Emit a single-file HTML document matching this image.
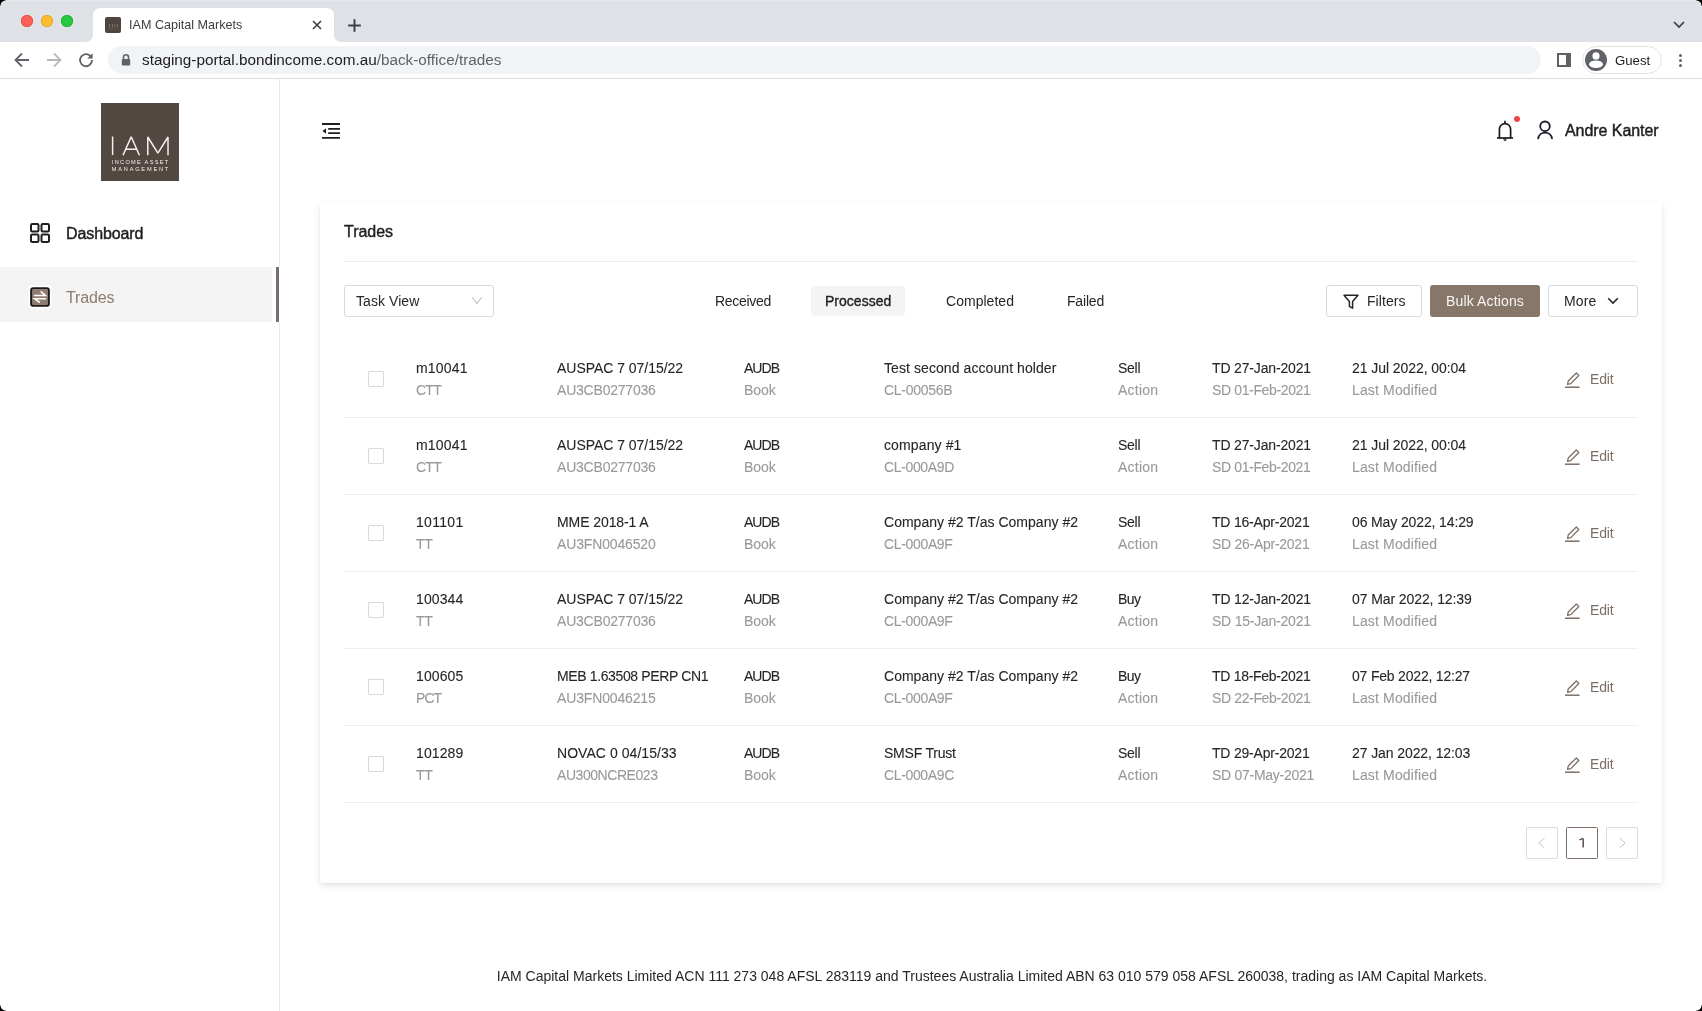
<!DOCTYPE html>
<html><head><meta charset="utf-8">
<style>
*{margin:0;padding:0;box-sizing:border-box}
html,body{width:1702px;height:1011px;overflow:hidden;background:#fff;font-family:"Liberation Sans",sans-serif;color:#262626}
.a{position:absolute}
.t{position:absolute;white-space:nowrap;line-height:20px;will-change:transform}
#tabstrip{left:0;top:0;width:1702px;height:42px;background:#dee1e6}
#toolbar{left:0;top:42px;width:1702px;height:37px;background:#fff;border-bottom:1px solid #dadce0}
#sidebar{left:0;top:79px;width:280px;height:932px;border-right:1px solid #e8e8e8}
.card{left:320px;top:203px;width:1342px;height:680px;background:#fff;border-radius:2px;box-shadow:0 3px 8px rgba(0,0,0,0.09),0 1px 3px rgba(0,0,0,0.05)}
.row1{font-size:14px;color:#262626;-webkit-text-stroke:0.1px #262626}
.row2{font-size:14px;color:#999;-webkit-text-stroke:0.1px #999}
.divl{position:absolute;left:344px;width:1294px;height:1px;background:#efefef}
</style></head><body>
<!-- Chrome -->
<div id="tabstrip" class="a"></div><div class="a" style="left:0;top:0;width:1702px;height:1px;background:#e7e8ec"></div>
<div id="toolbar" class="a"></div>

<!-- traffic lights -->
<div class="a" style="left:21px;top:15px;width:12px;height:12px;border-radius:50%;background:#fe5f57;box-shadow:inset 0 0 0 0.8px #e0443e"></div>
<div class="a" style="left:41px;top:15px;width:12px;height:12px;border-radius:50%;background:#febc2e;box-shadow:inset 0 0 0 0.8px #dea123"></div>
<div class="a" style="left:61px;top:15px;width:12px;height:12px;border-radius:50%;background:#28c840;box-shadow:inset 0 0 0 0.8px #1aab29"></div>
<!-- active tab -->
<svg class="a" style="left:85px;top:8px" width="258" height="35" viewBox="0 0 258 35">
<path d="M0 34 Q8 34 8 26 L8 8 Q8 0 16 0 L241 0 Q249 0 249 8 L249 26 Q249 34 257 34 L257 35 L0 35 Z" fill="#fff"/>
</svg>
<div class="a" style="left:105px;top:17px;width:16px;height:16px;background:#4f443e;border-radius:2px"></div><svg class="a" style="left:105px;top:17px" width="16" height="16" viewBox="0 0 16 16"><g stroke="#7d736d" stroke-width="1"><path d="M4.5 7V10.5M7.5 7V10.5M10 7V10.5M12.5 7V10.5"/></g><path d="M5 12H11.5" stroke="#645a54" stroke-width="1"/></svg>
<div class="t" style="left:129px;top:15px;font-size:12.6px;color:#3c4043">IAM Capital Markets</div>
<svg class="a" style="left:311px;top:19px" width="12" height="12" viewBox="0 0 12 12"><path d="M2 2L10 10M10 2L2 10" stroke="#3c4043" stroke-width="1.6"/></svg>
<svg class="a" style="left:347px;top:18px" width="15" height="15" viewBox="0 0 15 15"><path d="M7.5 1.2V13.8M1.2 7.5H13.8" stroke="#3c4043" stroke-width="2"/></svg>
<svg class="a" style="left:1672px;top:19px" width="14" height="10" viewBox="0 0 14 10"><path d="M2 3L7 8L12 3" stroke="#3c4043" stroke-width="1.7" fill="none"/></svg>
<!-- toolbar icons -->
<svg class="a" style="left:13px;top:51px" width="18" height="18" viewBox="0 0 18 18"><path d="M16 9H3M9 2.5L2.5 9L9 15.5" stroke="#5f6368" stroke-width="1.8" fill="none"/></svg>
<svg class="a" style="left:45px;top:51px" width="18" height="18" viewBox="0 0 18 18"><path d="M2 9H15M9 2.5L15.5 9L9 15.5" stroke="#b7b9bc" stroke-width="1.8" fill="none"/></svg>
<svg class="a" style="left:77px;top:51px" width="18" height="18" viewBox="0 0 18 18"><path d="M14.2 6.2A6 6 0 1 0 15 9" stroke="#5f6368" stroke-width="1.8" fill="none"/><path d="M15.6 2.2V7.6H10.2Z" fill="#5f6368"/></svg>
<div class="a" style="left:108px;top:46px;width:1433px;height:28px;border-radius:14px;background:#f1f3f4"></div>
<svg class="a" style="left:120px;top:53px" width="12" height="14" viewBox="0 0 12 14"><path d="M3.5 6V4.2A2.5 2.5 0 0 1 8.5 4.2V6" stroke="#5f6368" stroke-width="1.6" fill="none"/><rect x="1.8" y="6" width="8.4" height="6.6" rx="1" fill="#5f6368"/></svg>
<div class="t" style="left:142px;top:50px;font-size:15.3px;color:#202124">staging-portal.bondincome.com.au<span style="color:#5f6368">/back-office/trades</span></div>
<div class="a" style="left:1557px;top:53px;width:14px;height:14px;background:#5f6368"></div><div class="a" style="left:1559px;top:55px;width:7px;height:10px;background:#fff"></div>
<div class="a" style="left:1582px;top:46px;width:80px;height:28px;border-radius:14px;border:1px solid #e3e3e3"></div>
<svg class="a" style="left:1585px;top:49px" width="22" height="22" viewBox="0 0 22 22"><defs><clipPath id="cc"><circle cx="11" cy="11" r="11"/></clipPath></defs><circle cx="11" cy="11" r="11" fill="#5f6368"/><g clip-path="url(#cc)"><circle cx="11" cy="6.9" r="3.6" fill="#fff"/><ellipse cx="11" cy="15.3" rx="6.9" ry="3.8" fill="#fff"/></g></svg>
<div class="t" style="left:1615px;top:51px;font-size:13.2px;color:#202124">Guest</div>
<div class="a" style="left:1679px;top:54px;width:3px;height:3px;border-radius:50%;background:#5f6368"></div>
<div class="a" style="left:1679px;top:59px;width:3px;height:3px;border-radius:50%;background:#5f6368"></div>
<div class="a" style="left:1679px;top:64px;width:3px;height:3px;border-radius:50%;background:#5f6368"></div>
<div id="sidebar" class="a"></div>

<!-- logo -->
<div class="a" style="left:101px;top:103px;width:78px;height:78px;background:#524741"></div>
<svg class="a" style="left:101px;top:103px;will-change:transform" width="78" height="78" viewBox="0 0 78 78">
<g stroke="#f4f1ee" stroke-width="1.5" fill="none" stroke-linejoin="bevel">
<path d="M11.6 33.5V52"/>
<path d="M22 52.2L30.2 33.8L38.4 52.2M24.8 46.2H35.6"/>
<path d="M46.8 52.2V34L56.9 50.2L67 34V52.2"/>
</g>
<text x="10.8" y="61.2" font-family="Liberation Sans" font-size="5.6" fill="#f4f1ee" textLength="56.4" lengthAdjust="spacing">INCOME ASSET</text>
<text x="10.8" y="68.2" font-family="Liberation Sans" font-size="5.6" fill="#f4f1ee" textLength="56.4" lengthAdjust="spacing">MANAGEMENT</text>
</svg>
<!-- nav -->
<svg class="a" style="left:30px;top:223px" width="20" height="20" viewBox="0 0 20 20"><g fill="none" stroke="#1f1f1f" stroke-width="2"><rect x="1" y="1" width="7.5" height="7.5" rx="1.2"/><rect x="11.5" y="1" width="7.5" height="7.5" rx="1.2"/><rect x="1" y="11.5" width="7.5" height="7.5" rx="1.2"/><rect x="11.5" y="11.5" width="7.5" height="7.5" rx="1.2"/></g></svg>
<div class="t" style="left:66px;top:224px;font-size:16px;color:#1f1f1f;-webkit-text-stroke:0.45px #1f1f1f;letter-spacing:-0.107px">Dashboard</div>
<div class="a" style="left:0;top:267px;width:272px;height:55px;background:#f4f4f4"></div><div class="a" style="left:272px;top:267px;width:8px;height:55px;background:#fff"></div>
<div class="a" style="left:276px;top:267px;width:3px;height:55px;background:#7b7069"></div>
<svg class="a" style="left:28px;top:285px" width="24" height="24" viewBox="0 0 24 24"><rect x="0.5" y="0.5" width="23" height="23" rx="4" fill="#fff"/><rect x="3.1" y="3.1" width="17.8" height="17.8" rx="2.2" fill="#8f7d71" stroke="#1a1a1a" stroke-width="1.9"/><g stroke="#fff" stroke-width="1.6" fill="none" stroke-linecap="round"><path d="M6.6 10.5H17.3L13.2 6.9"/><path d="M17.5 13.7H6.6L11.2 17.2"/></g></svg>
<div class="t" style="left:66px;top:287.5px;font-size:16px;color:#8c7b70;letter-spacing:-0.131px">Trades</div>
<!-- header -->
<svg class="a" style="left:321px;top:122px" width="20" height="18" viewBox="0 0 20 18"><g stroke="#1f1f1f" stroke-width="1.8"><path d="M1 2H19M7.2 6.8H19M7.2 11.1H19M1 15.9H19"/></g><path d="M5 6.2V11.7L1.5 8.95Z" fill="#1f1f1f"/></svg>
<svg class="a" style="left:1495px;top:119px" width="20" height="23" viewBox="0 0 20 23"><g fill="none" stroke="#1a1a1a" stroke-width="1.7"><path d="M4.4 19V10.2A5.6 5.6 0 0 1 15.6 10.2V19"/><path d="M2 19H18"/><path d="M10 1.8V4.4"/></g><rect x="8.6" y="19.5" width="2.8" height="2.2" rx="0.6" fill="#1a1a1a"/><rect x="9.4" y="20" width="1.2" height="1" fill="#888"/></svg>
<div class="a" style="left:1514px;top:116px;width:6px;height:6px;border-radius:50%;background:#f0474b"></div>
<svg class="a" style="left:1535px;top:120px" width="20" height="20" viewBox="0 0 20 20"><g fill="none" stroke="#1a1a2e" stroke-width="1.8" stroke-linecap="round"><circle cx="10" cy="6.3" r="4.8"/><path d="M3.2 18.4A7 7 0 0 1 17 18.4"/></g></svg>
<div class="t" style="left:1564.5px;top:121px;font-size:16px;color:#1f1f1f;-webkit-text-stroke:0.45px #1f1f1f;letter-spacing:-0.057px">Andre Kanter</div>
<div class="card a"></div>
<div class="t" style="left:344px;top:221.5px;font-size:16px;color:#1f1f1f;-webkit-text-stroke:0.4px #1f1f1f;letter-spacing:-0.037px">Trades</div>
<div class="a" style="left:344px;top:261px;width:1294px;height:1px;background:#ededed"></div>
<div class="a" style="left:344px;top:285px;width:150px;height:32px;border:1px solid #d9d9d9;border-radius:3px"></div>
<div class="t" style="left:356px;top:291px;font-size:14px;color:#262626;letter-spacing:0.061px">Task View</div>
<svg class="a" style="left:471px;top:296px" width="12" height="10" viewBox="0 0 12 10"><path d="M1.3 1.5L5.9 7.6L10.5 1.5" stroke="#bfbfbf" stroke-width="1.1" fill="none"/></svg>
<div class="t" style="left:715px;top:291px;font-size:14px;color:#262626;letter-spacing:-0.308px">Received</div>
<div class="a" style="left:811px;top:286px;width:94px;height:30px;border-radius:4px;background:#f4f4f4"></div>
<div class="t" style="left:825px;top:291px;font-size:14px;color:#1f1f1f;-webkit-text-stroke:0.35px #1f1f1f;letter-spacing:0.014px">Processed</div>
<div class="t" style="left:946px;top:291px;font-size:14px;color:#262626;letter-spacing:0.033px">Completed</div>
<div class="t" style="left:1067px;top:291px;font-size:14px;color:#262626;letter-spacing:-0.178px">Failed</div>
<div class="a" style="left:1326px;top:285px;width:96px;height:32px;border:1px solid #d9d9d9;border-radius:3px"></div>
<svg class="a" style="left:1342px;top:293px" width="18" height="17" viewBox="0 0 18 17"><path d="M2 2.2H16L10.6 8.6V15.2L7.4 13.4V8.6Z" stroke="#262626" stroke-width="1.5" fill="none" stroke-linejoin="round"/></svg>
<div class="t" style="left:1367px;top:291px;font-size:14px;color:#262626;letter-spacing:0.068px">Filters</div>
<div class="a" style="left:1430px;top:285px;width:110px;height:32px;border-radius:3px;background:#877769"></div>
<div class="t" style="left:1446px;top:291px;font-size:14px;color:#f7f5f3;letter-spacing:0.141px">Bulk Actions</div>
<div class="a" style="left:1548px;top:285px;width:90px;height:32px;border:1px solid #d9d9d9;border-radius:3px"></div>
<div class="t" style="left:1564px;top:291px;font-size:14px;color:#262626;letter-spacing:0.115px">More</div>
<svg class="a" style="left:1606px;top:295px" width="14" height="12" viewBox="0 0 14 12"><path d="M2.2 3.2L7 8L11.8 3.2" stroke="#262626" stroke-width="1.6" fill="none"/></svg>
<div class="a" style="left:368px;top:371px;width:16px;height:16px;border:1px solid #d9d9d9;border-radius:1px"></div>
<div class="t row1" style="left:416px;top:358px;letter-spacing:0.206px">m10041</div><div class="t row2" style="left:416px;top:380px;letter-spacing:-0.742px">CTT</div>
<div class="t row1" style="left:556.5px;top:358px;letter-spacing:-0.035px">AUSPAC 7 07/15/22</div><div class="t row2" style="left:556.5px;top:380px;letter-spacing:-0.21px">AU3CB0277036</div>
<div class="t row1" style="left:744px;top:358px;letter-spacing:-0.964px">AUDB</div><div class="t row2" style="left:744px;top:380px;letter-spacing:-0.042px">Book</div>
<div class="t row1" style="left:884px;top:358px;letter-spacing:0.077px">Test second account holder</div><div class="t row2" style="left:884px;top:380px;letter-spacing:-0.279px">CL-00056B</div>
<div class="t row1" style="left:1118px;top:358px;letter-spacing:-0.271px">Sell</div><div class="t row2" style="left:1118px;top:380px;letter-spacing:0.25px">Action</div>
<div class="t row1" style="left:1211.5px;top:358px;letter-spacing:-0.163px">TD 27-Jan-2021</div><div class="t row2" style="left:1211.5px;top:380px;letter-spacing:-0.362px">SD 01-Feb-2021</div>
<div class="t row1" style="left:1352px;top:358px;letter-spacing:-0.066px">21 Jul 2022, 00:04</div><div class="t row2" style="left:1352px;top:380px;letter-spacing:0.146px">Last Modified</div>
<svg class="a" style="left:1564px;top:370px" width="18" height="19" viewBox="0 0 18 19"><path d="M3.6 14.3L4.2 11L12.3 3L14.8 5.5L6.8 13.6Z" stroke="#7d6e65" stroke-width="1.3" fill="none" stroke-linejoin="round"/><path d="M1 17.2H15.6" stroke="#7d6e65" stroke-width="1.5"/></svg>
<div class="t" style="left:1590px;top:369px;font-size:14px;color:#7d6e65;letter-spacing:-0.135px">Edit</div>
<div class="divl" style="top:417px"></div>
<div class="a" style="left:368px;top:448px;width:16px;height:16px;border:1px solid #d9d9d9;border-radius:1px"></div>
<div class="t row1" style="left:416px;top:435px;letter-spacing:0.206px">m10041</div><div class="t row2" style="left:416px;top:457px;letter-spacing:-0.742px">CTT</div>
<div class="t row1" style="left:556.5px;top:435px;letter-spacing:-0.035px">AUSPAC 7 07/15/22</div><div class="t row2" style="left:556.5px;top:457px;letter-spacing:-0.21px">AU3CB0277036</div>
<div class="t row1" style="left:744px;top:435px;letter-spacing:-0.964px">AUDB</div><div class="t row2" style="left:744px;top:457px;letter-spacing:-0.042px">Book</div>
<div class="t row1" style="left:884px;top:435px;letter-spacing:0.123px">company #1</div><div class="t row2" style="left:884px;top:457px;letter-spacing:-0.354px">CL-000A9D</div>
<div class="t row1" style="left:1118px;top:435px;letter-spacing:-0.271px">Sell</div><div class="t row2" style="left:1118px;top:457px;letter-spacing:0.25px">Action</div>
<div class="t row1" style="left:1211.5px;top:435px;letter-spacing:-0.163px">TD 27-Jan-2021</div><div class="t row2" style="left:1211.5px;top:457px;letter-spacing:-0.362px">SD 01-Feb-2021</div>
<div class="t row1" style="left:1352px;top:435px;letter-spacing:-0.066px">21 Jul 2022, 00:04</div><div class="t row2" style="left:1352px;top:457px;letter-spacing:0.146px">Last Modified</div>
<svg class="a" style="left:1564px;top:447px" width="18" height="19" viewBox="0 0 18 19"><path d="M3.6 14.3L4.2 11L12.3 3L14.8 5.5L6.8 13.6Z" stroke="#7d6e65" stroke-width="1.3" fill="none" stroke-linejoin="round"/><path d="M1 17.2H15.6" stroke="#7d6e65" stroke-width="1.5"/></svg>
<div class="t" style="left:1590px;top:446px;font-size:14px;color:#7d6e65;letter-spacing:-0.135px">Edit</div>
<div class="divl" style="top:494px"></div>
<div class="a" style="left:368px;top:525px;width:16px;height:16px;border:1px solid #d9d9d9;border-radius:1px"></div>
<div class="t row1" style="left:416px;top:512px;letter-spacing:0.306px">101101</div><div class="t row2" style="left:416px;top:534px;letter-spacing:-0.281px">TT</div>
<div class="t row1" style="left:556.5px;top:512px;letter-spacing:-0.082px">MME 2018-1 A</div><div class="t row2" style="left:556.5px;top:534px;letter-spacing:-0.149px">AU3FN0046520</div>
<div class="t row1" style="left:744px;top:512px;letter-spacing:-0.964px">AUDB</div><div class="t row2" style="left:744px;top:534px;letter-spacing:-0.042px">Book</div>
<div class="t row1" style="left:884px;top:512px;letter-spacing:0.019px">Company #2 T/as Company #2</div><div class="t row2" style="left:884px;top:534px;letter-spacing:-0.34px">CL-000A9F</div>
<div class="t row1" style="left:1118px;top:512px;letter-spacing:-0.271px">Sell</div><div class="t row2" style="left:1118px;top:534px;letter-spacing:0.25px">Action</div>
<div class="t row1" style="left:1211.5px;top:512px;letter-spacing:-0.207px">TD 16-Apr-2021</div><div class="t row2" style="left:1211.5px;top:534px;letter-spacing:-0.269px">SD 26-Apr-2021</div>
<div class="t row1" style="left:1352px;top:512px;letter-spacing:-0.127px">06 May 2022, 14:29</div><div class="t row2" style="left:1352px;top:534px;letter-spacing:0.146px">Last Modified</div>
<svg class="a" style="left:1564px;top:524px" width="18" height="19" viewBox="0 0 18 19"><path d="M3.6 14.3L4.2 11L12.3 3L14.8 5.5L6.8 13.6Z" stroke="#7d6e65" stroke-width="1.3" fill="none" stroke-linejoin="round"/><path d="M1 17.2H15.6" stroke="#7d6e65" stroke-width="1.5"/></svg>
<div class="t" style="left:1590px;top:523px;font-size:14px;color:#7d6e65;letter-spacing:-0.135px">Edit</div>
<div class="divl" style="top:571px"></div>
<div class="a" style="left:368px;top:602px;width:16px;height:16px;border:1px solid #d9d9d9;border-radius:1px"></div>
<div class="t row1" style="left:416px;top:589px;letter-spacing:0.1px">100344</div><div class="t row2" style="left:416px;top:611px;letter-spacing:-0.281px">TT</div>
<div class="t row1" style="left:556.5px;top:589px;letter-spacing:-0.035px">AUSPAC 7 07/15/22</div><div class="t row2" style="left:556.5px;top:611px;letter-spacing:-0.21px">AU3CB0277036</div>
<div class="t row1" style="left:744px;top:589px;letter-spacing:-0.964px">AUDB</div><div class="t row2" style="left:744px;top:611px;letter-spacing:-0.042px">Book</div>
<div class="t row1" style="left:884px;top:589px;letter-spacing:0.019px">Company #2 T/as Company #2</div><div class="t row2" style="left:884px;top:611px;letter-spacing:-0.34px">CL-000A9F</div>
<div class="t row1" style="left:1118px;top:589px;letter-spacing:-0.523px">Buy</div><div class="t row2" style="left:1118px;top:611px;letter-spacing:0.25px">Action</div>
<div class="t row1" style="left:1211.5px;top:589px;letter-spacing:-0.163px">TD 12-Jan-2021</div><div class="t row2" style="left:1211.5px;top:611px;letter-spacing:-0.227px">SD 15-Jan-2021</div>
<div class="t row1" style="left:1352px;top:589px;letter-spacing:-0.094px">07 Mar 2022, 12:39</div><div class="t row2" style="left:1352px;top:611px;letter-spacing:0.146px">Last Modified</div>
<svg class="a" style="left:1564px;top:601px" width="18" height="19" viewBox="0 0 18 19"><path d="M3.6 14.3L4.2 11L12.3 3L14.8 5.5L6.8 13.6Z" stroke="#7d6e65" stroke-width="1.3" fill="none" stroke-linejoin="round"/><path d="M1 17.2H15.6" stroke="#7d6e65" stroke-width="1.5"/></svg>
<div class="t" style="left:1590px;top:600px;font-size:14px;color:#7d6e65;letter-spacing:-0.135px">Edit</div>
<div class="divl" style="top:648px"></div>
<div class="a" style="left:368px;top:679px;width:16px;height:16px;border:1px solid #d9d9d9;border-radius:1px"></div>
<div class="t row1" style="left:416px;top:666px;letter-spacing:0.1px">100605</div><div class="t row2" style="left:416px;top:688px;letter-spacing:-0.945px">PCT</div>
<div class="t row1" style="left:556.5px;top:666px;letter-spacing:-0.372px">MEB 1.63508 PERP CN1</div><div class="t row2" style="left:556.5px;top:688px;letter-spacing:-0.149px">AU3FN0046215</div>
<div class="t row1" style="left:744px;top:666px;letter-spacing:-0.964px">AUDB</div><div class="t row2" style="left:744px;top:688px;letter-spacing:-0.042px">Book</div>
<div class="t row1" style="left:884px;top:666px;letter-spacing:0.019px">Company #2 T/as Company #2</div><div class="t row2" style="left:884px;top:688px;letter-spacing:-0.34px">CL-000A9F</div>
<div class="t row1" style="left:1118px;top:666px;letter-spacing:-0.523px">Buy</div><div class="t row2" style="left:1118px;top:688px;letter-spacing:0.25px">Action</div>
<div class="t row1" style="left:1211.5px;top:666px;letter-spacing:-0.298px">TD 18-Feb-2021</div><div class="t row2" style="left:1211.5px;top:688px;letter-spacing:-0.362px">SD 22-Feb-2021</div>
<div class="t row1" style="left:1352px;top:666px;letter-spacing:-0.195px">07 Feb 2022, 12:27</div><div class="t row2" style="left:1352px;top:688px;letter-spacing:0.146px">Last Modified</div>
<svg class="a" style="left:1564px;top:678px" width="18" height="19" viewBox="0 0 18 19"><path d="M3.6 14.3L4.2 11L12.3 3L14.8 5.5L6.8 13.6Z" stroke="#7d6e65" stroke-width="1.3" fill="none" stroke-linejoin="round"/><path d="M1 17.2H15.6" stroke="#7d6e65" stroke-width="1.5"/></svg>
<div class="t" style="left:1590px;top:677px;font-size:14px;color:#7d6e65;letter-spacing:-0.135px">Edit</div>
<div class="divl" style="top:725px"></div>
<div class="a" style="left:368px;top:756px;width:16px;height:16px;border:1px solid #d9d9d9;border-radius:1px"></div>
<div class="t row1" style="left:416px;top:743px;letter-spacing:0.1px">101289</div><div class="t row2" style="left:416px;top:765px;letter-spacing:-0.281px">TT</div>
<div class="t row1" style="left:556.5px;top:743px;letter-spacing:0.054px">NOVAC 0 04/15/33</div><div class="t row2" style="left:556.5px;top:765px;letter-spacing:-0.44px">AU300NCRE023</div>
<div class="t row1" style="left:744px;top:743px;letter-spacing:-0.964px">AUDB</div><div class="t row2" style="left:744px;top:765px;letter-spacing:-0.042px">Book</div>
<div class="t row1" style="left:884px;top:743px;letter-spacing:-0.222px">SMSF Trust</div><div class="t row2" style="left:884px;top:765px;letter-spacing:-0.363px">CL-000A9C</div>
<div class="t row1" style="left:1118px;top:743px;letter-spacing:-0.271px">Sell</div><div class="t row2" style="left:1118px;top:765px;letter-spacing:0.25px">Action</div>
<div class="t row1" style="left:1211.5px;top:743px;letter-spacing:-0.207px">TD 29-Apr-2021</div><div class="t row2" style="left:1211.5px;top:765px;letter-spacing:-0.273px">SD 07-May-2021</div>
<div class="t row1" style="left:1352px;top:743px;letter-spacing:-0.092px">27 Jan 2022, 12:03</div><div class="t row2" style="left:1352px;top:765px;letter-spacing:0.146px">Last Modified</div>
<svg class="a" style="left:1564px;top:755px" width="18" height="19" viewBox="0 0 18 19"><path d="M3.6 14.3L4.2 11L12.3 3L14.8 5.5L6.8 13.6Z" stroke="#7d6e65" stroke-width="1.3" fill="none" stroke-linejoin="round"/><path d="M1 17.2H15.6" stroke="#7d6e65" stroke-width="1.5"/></svg>
<div class="t" style="left:1590px;top:754px;font-size:14px;color:#7d6e65;letter-spacing:-0.135px">Edit</div>
<div class="divl" style="top:802px"></div>

<div class="a" style="left:1526px;top:827px;width:32px;height:32px;border:1px solid #dcdcdc;border-radius:1px"></div>
<svg class="a" style="left:1536px;top:837px" width="12" height="12" viewBox="0 0 12 12"><path d="M8.6 1L2.8 6L8.6 11" stroke="#c8c8c8" stroke-width="1" fill="none"/></svg>
<div class="a" style="left:1566px;top:827px;width:32px;height:32px;border:1px solid #7d6e65;border-radius:1.5px"></div>
<svg class="a" style="left:1576px;top:836px" width="12" height="14" viewBox="0 0 12 14"><path d="M7.2 2.4V11.6M7.2 2.4L3.4 3.9" stroke="#5c4f47" stroke-width="1.5" fill="none"/></svg>
<div class="a" style="left:1606px;top:827px;width:32px;height:32px;border:1px solid #dcdcdc;border-radius:1px"></div>
<svg class="a" style="left:1616px;top:837px" width="12" height="12" viewBox="0 0 12 12"><path d="M3.4 1L9.2 6L3.4 11" stroke="#c8c8c8" stroke-width="1" fill="none"/></svg>
<div class="t" style="left:281px;top:966px;width:1422px;text-align:center;font-size:14px;color:#262626">IAM Capital Markets Limited ACN 111 273 048 AFSL 283119 and Trustees Australia Limited ABN 63 010 579 058 AFSL 260038, trading as IAM Capital Markets.</div>


<div class="a" style="left:0;top:0;width:6px;height:6px;background:radial-gradient(circle at 6px 6px, rgba(0,0,0,0) 5.2px, #000 6px)"></div>
<div class="a" style="left:1696px;top:0;width:6px;height:6px;background:radial-gradient(circle at 0 6px, rgba(0,0,0,0) 5.2px, #000 6px)"></div>
<div class="a" style="left:0;top:1005px;width:6px;height:6px;background:radial-gradient(circle at 6px 0, rgba(0,0,0,0) 5.2px, #000 6px)"></div>
<div class="a" style="left:1696px;top:1005px;width:6px;height:6px;background:radial-gradient(circle at 0 0, rgba(0,0,0,0) 5.2px, #000 6px)"></div>
</body></html>
